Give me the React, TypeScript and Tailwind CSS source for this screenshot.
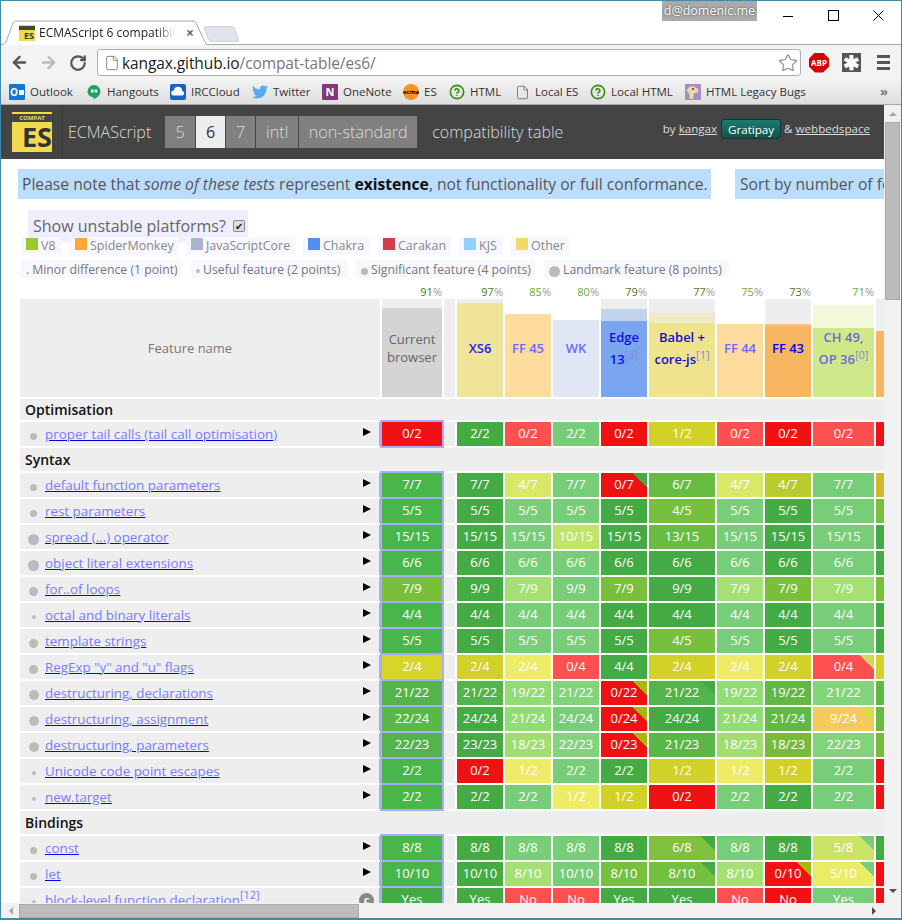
import React from 'react';
import { ArrowLeft, ArrowRight, RotateCw, File, Star, CircleHelp } from 'lucide-react';
import { FaTwitter } from 'react-icons/fa';

// cell colours
const G = 'bg-[#44aa44]';
const L = 'bg-[#78cd78]';
const C = 'bg-[#49b649]';
const R = 'bg-[#f01212]';
const LR = 'bg-[#ff5050]';
const Y = 'bg-[#d1d128]';
const LY = 'bg-[#eeec66]';
const G21 = 'bg-[#52b44a]';
const L21 = 'bg-[#82d47a]';
const L19 = 'bg-[#91dc74]';
const D19 = 'bg-[#62b844]';
const L18 = 'bg-[#a2dd70]';
const D18 = 'bg-[#78bb38]';
const G22 = 'bg-[#5ab848]';
const D4 = 'bg-[#76c03e]';
const D6 = 'bg-[#68bc42]';
const L7 = 'bg-[#a5e074]';
const D7 = 'bg-[#7abf3c]';
const TRI_G = 'bg-[linear-gradient(225deg,#44aa44_10px,#f01212_10px)]';
const TRI_O = 'bg-[linear-gradient(225deg,#a8b808_10px,#f01212_10px)]';
const TRI_RL = 'bg-[linear-gradient(225deg,#cfd85a_10px,#ff5050_10px)]';
const TRI_21 = 'bg-[linear-gradient(225deg,#44aa44_10px,#52b44a_10px)]';
const TRI_9 = 'bg-[linear-gradient(225deg,#cfe040_10px,#f2cb5a_10px)]';
const TRI_6 = 'bg-[linear-gradient(225deg,#44aa44_10px,#80c03e_10px)]';
const TRI_5 = 'bg-[linear-gradient(225deg,#78cd78_10px,#cbe468_10px)]';
const TRI_8 = 'bg-[linear-gradient(225deg,#44aa44_10px,#74c040_10px)]';
const TRI_LY = 'bg-[linear-gradient(225deg,#78cd78_10px,#eaec66_10px)]';

type Row = { name?: string; section?: string; rowH?: string; dot?: string; sup?: string; cells?: [string, string][]; next?: string; flag?: boolean };

const same = (t: string, extra: Partial<Record<number, [string, string]>> = {}) => {
  const base: [string, string][] = [[t, C], [t, G], [t, L], [t, L], [t, G], [t, G], [t, L], [t, G], [t, L]];
  Object.entries(extra).forEach(([k, v]) => { if (v) base[Number(k)] = v; });
  return base;
};

const rows: Row[] = [
  { section: 'Optimisation', rowH: 'h-[21px]' },
  { name: 'proper tail calls (tail call optimisation)', dot: 'size-[7px]', next: R, cells: [['0/2', R], ['2/2', G], ['0/2', LR], ['2/2', L], ['0/2', R], ['1/2', Y], ['0/2', LR], ['0/2', R], ['0/2', LR]] },
  { section: 'Syntax', rowH: 'h-[23px]' },
  { name: 'default function parameters', dot: 'size-[7px]', next: 'bg-[#d2b82a]', cells: [['7/7', C], ['7/7', G], ['4/7', 'bg-[#d9e868]'], ['7/7', L], ['0/7', TRI_G], ['6/7', D6], ['4/7', 'bg-[#d9e868]'], ['4/7', 'bg-[#b8cc30]'], ['7/7', L]] },
  { name: 'rest parameters', dot: 'size-[7px]', next: D4, cells: same('5/5', { 5: ['4/5', D4] }) },
  { name: 'spread (...) operator', dot: 'size-[11px]', next: G, cells: same('15/15', { 3: ['10/15', 'bg-[#bfe46a]'], 5: ['13/15', D6] }) },
  { name: 'object literal extensions', dot: 'size-[11px]', next: G, cells: same('6/6') },
  { name: 'for..of loops', dot: 'size-[9px]', next: D7, cells: [['7/9', D7], ['9/9', G], ['7/9', L7], ['9/9', L], ['7/9', D7], ['9/9', G], ['7/9', L7], ['7/9', D7], ['7/9', L7]] },
  { name: 'octal and binary literals', dot: 'size-[4px]', next: G, cells: same('4/4') },
  { name: 'template strings', dot: 'size-[9px]', next: G, cells: same('5/5', { 5: ['4/5', D4] }) },
  { name: 'RegExp "y" and "u" flags', dot: 'size-[9px]', next: Y, cells: [['2/4', 'bg-[#d5d52a]'], ['2/4', Y], ['2/4', LY], ['0/4', LR], ['4/4', G], ['2/4', Y], ['2/4', LY], ['2/4', Y], ['0/4', TRI_RL]] },
  { name: 'destructuring, declarations', dot: 'size-[10px]', next: D19, cells: [['21/22', G21], ['21/22', G21], ['19/22', L19], ['21/22', L21], ['0/22', TRI_O], ['21/22', TRI_21], ['19/22', L19], ['19/22', D19], ['21/22', L21]] },
  { name: 'destructuring, assignment', dot: 'size-[10px]', next: D6, cells: [['22/24', G22], ['24/24', G], ['21/24', L19], ['24/24', L], ['0/24', TRI_O], ['24/24', G], ['21/24', L19], ['21/24', D19], ['9/24', TRI_9]] },
  { name: 'destructuring, parameters', dot: 'size-[10px]', next: D18, cells: [['22/23', G21], ['23/23', G], ['18/23', L18], ['22/23', L21], ['0/23', TRI_O], ['21/23', G22], ['18/23', L18], ['18/23', D18], ['22/23', L21]] },
  { name: 'Unicode code point escapes', dot: 'size-[4px]', next: R, cells: [['2/2', C], ['0/2', R], ['1/2', LY], ['2/2', L], ['2/2', G], ['1/2', Y], ['1/2', LY], ['1/2', Y], ['2/2', L]] },
  { name: 'new.target', dot: 'size-[4px]', next: R, cells: [['2/2', C], ['2/2', G], ['2/2', L], ['1/2', LY], ['1/2', Y], ['0/2', R], ['2/2', L], ['2/2', G], ['2/2', L]] },
  { section: 'Bindings', rowH: 'h-[23px]' },
  { name: 'const', dot: 'size-[7px]', next: G, cells: same('8/8', { 5: ['6/8', TRI_6], 8: ['5/8', TRI_5] }) },
  { name: 'let', dot: 'size-[7px]', next: R, cells: [['10/10', C], ['10/10', G], ['8/10', L7], ['10/10', L], ['8/10', D4], ['8/10', TRI_8], ['8/10', L7], ['0/10', TRI_O], ['5/10', TRI_LY]] },
  { name: 'block-level function declaration', sup: '[12]', dot: 'size-[4px]', next: R, flag: true, cells: [['Yes', G], ['Yes', G], ['No', LR], ['No', LR], ['Yes', G], ['Yes', G], ['No', LR], ['No', R], ['Yes', L]] },
];

const browsers = [
  { name: 'XS6', pct: '97', pctColor: 'text-[#4e7d14]', bg: 'bg-[#eeeeee]', text: 'text-[#2222ee] font-semibold', bars: [['h-[94px]', 'bg-[#f0e49a]']] },
  { name: 'FF 45', pct: '85', pctColor: 'text-[#6ea83a]', bg: 'bg-white', text: 'text-[#6a6aff] font-semibold', bars: [['h-[83px]', 'bg-[#fedc9e]']] },
  { name: 'WK', pct: '80', pctColor: 'text-[#6ea83a]', bg: 'bg-white', text: 'text-[#6a6aff] font-semibold', bars: [['h-[77px]', 'bg-[#e0e6f3]']] },
  { name: 'Edge 13', sup: '[3]', pct: '79', pctColor: 'text-[#4e7d14]', bg: 'bg-[#eeeeee]', text: 'text-[#1111dd] font-semibold', bars: [['h-[12px]', 'bg-[#c3d3ee]'], ['h-[76px]', 'bg-[#7aa5ef]']] },
  { name: 'Babel + core-js', sup: '[1]', pct: '77', pctColor: 'text-[#4e7d14]', bg: 'bg-[#eeeeee]', text: 'text-[#1111cc] font-semibold', bars: [['h-[10px]', 'bg-[#efe9c9]'], ['h-[74px]', 'bg-[#f0e38e]']] },
  { name: 'FF 44', pct: '75', pctColor: 'text-[#6ea83a]', bg: 'bg-white', text: 'text-[#6a6aff] font-semibold', bars: [['h-[73px]', 'bg-[#fedc9e]']] },
  { name: 'FF 43', pct: '73', pctColor: 'text-[#4e7d14]', bg: 'bg-[#eeeeee]', text: 'text-[#0000ee] font-semibold', bars: [['h-[2px]', 'bg-[#f3c08e]'], ['h-[71px]', 'bg-[#f7b760]']] },
  { name: 'CH 49, OP 36', sup: '[0]', pct: '71', pctColor: 'text-[#6ea83a]', bg: 'bg-white', text: 'text-[#6a6ad8] font-semibold', bars: [['h-[23px]', 'bg-[#f1f9da]'], ['h-[69px]', 'bg-[#cfe98a]']] },
];

const widths = ['w-[360px]', 'w-[60px]', 'w-[11px]', 'w-[46px]', 'w-[46px]', 'w-[46px]', 'w-[46px]', 'w-[66px]', 'w-[46px]', 'w-[46px]', 'w-[61px]', 'w-[46px]'];

const legend = [
  ['V8', 'bg-[#9ac92e]', 'w-[41px]'],
  ['SpiderMonkey', 'bg-[#ffa733]', 'w-[108px]'],
  ['JavaScriptCore', 'bg-[#aab4cf]', 'w-[109px]'],
  ['Chakra', 'bg-[#5190f0]', 'w-[67px]'],
  ['Carakan', 'bg-[#d63a44]', 'w-[73px]'],
  ['KJS', 'bg-[#90d0ff]', 'w-[44px]'],
  ['Other', 'bg-[#f0db68]', 'w-[58px]'],
];

const points = [
  ['.', 'Minor difference (1 point)', 'w-[161px]', ''],
  ['', 'Useful feature (2 points)', 'w-[156px]', 'size-[4px]'],
  ['', 'Significant feature (4 points)', 'w-[179px]', 'size-[7px]'],
  ['', 'Landmark feature (8 points)', 'w-[185px]', 'size-[11px]'],
];

const EsLogo = ({ small }: { small?: boolean }) => (
  small ? (
    <div className="flex flex-col w-[16px] h-[16px] bg-[#f0db4f] pt-[1px] shrink-0">
      <div className="h-[4px] bg-[#444]" />
      <div className="text-[9px] leading-[11px] font-bold text-[#333] text-right pr-[1px]">ES</div>
    </div>
  ) : (
    <div className="flex flex-col w-[40px] h-[40px] bg-[#f0db4f] pt-[2px] shrink-0 overflow-hidden">
      <div className="h-[8px] bg-[#444] text-[6px] leading-[8px] font-bold text-[#f0db4f] text-center">COMPAT</div>
      <div className="text-[27px] leading-[30px] font-bold text-[#333] text-right">ES</div>
    </div>
  )
);

const Bookmark = ({ icon, label, className }: { icon: React.ReactNode; label: string; className: string }) => (
  <div className={`flex items-center gap-[5px] shrink-0 ${className}`}>
    {icon}
    <span className="text-[11.500px] text-[#333]">{label}</span>
  </div>
);

const Bookmarks = () => (
  <div className="flex items-center h-[25px] bg-[linear-gradient(#f2f2f2,#dedede)] border-b border-[#a8a8a8] pl-[8px] relative">
    <Bookmark className="w-[77px]" label="Outlook" icon={
      <div className="flex items-center w-[16px] h-[16px] bg-[#0f78d4] rounded-[1px] text-white text-[10px] leading-[16px] font-bold pl-[1px]">
        O<span className="size-[5px] ml-[1px] bg-white" />
      </div>
    } />
    <Bookmark className="w-[84px]" label="Hangouts" icon={
      <svg viewBox="0 0 16 16" className="size-[16px]"><path d="M8 1a6.5 6.5 0 0 0-6.5 6.5C1.500 11 4.500 13 7.500 13v2.500C11 14 14.500 11 14.500 7.500A6.500 6.500 0 0 0 8 1z" fill="#1da261" /><rect x="5" y="5.500" width="2.500" height="3" fill="#fff" /><rect x="8.700" y="5.500" width="2.500" height="3" fill="#fff" /></svg>
    } />
    <Bookmark className="w-[82px]" label="IRCCloud" icon={
      <svg viewBox="0 0 16 16" className="size-[16px]"><rect width="16" height="16" rx="2" fill="#1c62c4" /><path d="M3.500 11.500a2.500 2.500 0 0 1 .5-5 4 4 0 0 1 8 .5 2.300 2.300 0 0 1 .5 4.500z" fill="#fff" /></svg>
    } />
    <Bookmark className="w-[70px]" label="Twitter" icon={<FaTwitter className="size-[16px] text-[#55acee]" />} />
    <Bookmark className="w-[81px]" label="OneNote" icon={
      <div className="w-[16px] h-[16px] bg-[#80397b] text-white text-[11px] leading-[16px] font-bold text-center rounded-[1px]">N</div>
    } />
    <Bookmark className="w-[46px]" label="ES" icon={
      <div className="w-[16px] h-[16px] rounded-full bg-[#f7931e] text-black text-[6px] leading-[16px] font-bold text-center">ecma</div>
    } />
    <Bookmark className="w-[66px]" label="HTML" icon={<CircleHelp className="size-[16px] text-[#3a8a12]" strokeWidth={2.4} />} />
    <Bookmark className="w-[75px]" label="Local ES" icon={<File className="size-[15px] text-[#666]" strokeWidth={1.3} />} />
    <Bookmark className="w-[95px]" label="Local HTML" icon={<CircleHelp className="size-[16px] text-[#3a8a12]" strokeWidth={2.4} />} />
    <Bookmark className="w-[130px]" label="HTML Legacy Bugs" icon={
      <svg viewBox="0 0 16 16" className="size-[16px]"><rect width="16" height="16" fill="#a78dc8" /><path d="M2 6c1-4 7-5 9-2 2 0 3 2 2 4-1 1-3 1-4 1l-1 6H5L4 9C3 9 2 8 2 6z" fill="#ecd9a6" /><circle cx="8" cy="5" r="1" fill="#333" /></svg>
    } />
    <span className="absolute left-[879px] top-[3px] text-[13px] leading-[16px] font-bold text-[#777]">»</span>
  </div>
);

const Toolbar = () => (
  <div className="flex items-center h-[35px] bg-[#f3f3f3] pl-[9px]">
    <ArrowLeft className="size-[19px] text-[#555]" strokeWidth={3} />
    <ArrowRight className="size-[19px] text-[#bbb] ml-[10px]" strokeWidth={3} />
    <RotateCw className="size-[18px] text-[#555] ml-[11px]" strokeWidth={3} />
    <div className="flex items-center w-[704px] h-[27px] ml-[10px] bg-white border border-[#b0b0b0] rounded-[3px] pl-[6px] pr-[2px]">
      <File className="size-[16px] text-[#777] shrink-0" strokeWidth={1.3} />
      <div className="ml-[2px] text-[15.5px] leading-[20px] text-[#777] whitespace-nowrap tracking-[-0.1px]">
        <span className="text-[#222]">kangax.github.io</span>/compat-table/es6/
      </div>
      <Star className="size-[20px] text-[#888] ml-auto fill-white" strokeWidth={1.3} />
    </div>
    <div className="flex items-center justify-center size-[20px] ml-[8px] bg-[#d40000] [clip-path:polygon(30%_0,70%_0,100%_30%,100%_70%,70%_100%,30%_100%,0_70%,0_30%)] text-white text-[8px] font-bold">ABP</div>
    <div className="flex items-center justify-center size-[19px] ml-[13px] bg-[#555] text-white text-[20px] leading-[19px] font-bold">✱</div>
    <div className="flex flex-col gap-[3px] w-[13px] ml-[16px]">
      <div className="h-[3px] bg-[#555]" />
      <div className="h-[3px] bg-[#555]" />
      <div className="h-[3px] bg-[#555]" />
    </div>
  </div>
);

const TabStrip = () => (
  <div className="flex h-[44px] bg-white border-b border-[#a8a8a8] relative">
    <div className="relative flex items-center w-[205px] h-[25px] mt-[19px] ml-[1px] pl-[17px] bg-white">
      <svg viewBox="0 0 205 25" className="absolute inset-0 w-[205px] h-[25px]">
        <path d="M0 25 L4 22 L11 3 Q12 1 14 1 L191 1 Q193 1 194 3 L203 22 L205 25" fill="#fff" stroke="#a8a8a8" />
      </svg>
      <div className="relative flex items-center gap-[4px]">
        <EsLogo small />
        <span className="w-[137px] text-[12px] text-[#222] whitespace-nowrap overflow-hidden [mask-image:linear-gradient(90deg,#000_85%,transparent)]">ECMAScript 6 compatibility table</span>
        <span className="ml-[6px] text-[#666] text-[14px] leading-none font-bold">×</span>
      </div>
    </div>
    <div className="w-[31px] h-[16px] mt-[25px] bg-[#dfe3ea] rounded-[3px] border border-[#cfd3da] skew-x-[20deg] -ml-[1px]" />
    <div className="absolute left-[661px] top-0 w-[95px] h-[20px] bg-[#aaaaaa] text-center text-[12.500px] leading-[20px] text-white [text-shadow:0_0_2px_#333]">d@domenic.me</div>
    <div className="absolute left-[782px] top-[15px] w-[10px] h-[1px] bg-black" />
    <div className="absolute left-[827px] top-[9px] size-[11px] border border-black" />
    <svg viewBox="0 0 11 11" className="absolute left-[872px] top-[9px] size-[11px]"><path d="M0.500 0.500 L10.500 10.500 M10.500 0.500 L0.500 10.500" stroke="#000" fill="none" /></svg>
  </div>
);

const PageHeader = () => (
  <div className="flex items-center h-[54px] bg-[#444444] text-[#dddddd]">
    <div className="flex items-center h-full pl-[11px] pr-[10px] border-r border-[#3a3a3a]">
      <EsLogo />
    </div>
    <span className="ml-[5px] text-[16px] font-light">ECMAScript</span>
    <div className="flex gap-[1px] ml-[14px] text-[16.200px] font-light">
      <div className="w-[30px] h-[32px] leading-[32px] text-center bg-[#808080]">5</div>
      <div className="w-[29px] h-[32px] leading-[32px] text-center bg-[#eeeeee] text-[#333] font-normal">6</div>
      <div className="w-[29px] h-[32px] leading-[32px] text-center bg-[#808080]">7</div>
      <div className="w-[42px] h-[32px] leading-[32px] text-center bg-[#808080]">intl</div>
      <div className="w-[118px] h-[32px] leading-[32px] text-center bg-[#808080]">non-standard</div>
    </div>
    <span className="ml-[15px] text-[16px] font-light">compatibility table</span>
    <div className="flex items-center ml-auto mr-[14px] -mt-[6px] text-[11.600px]">
      <span>by <a className="underline">kangax</a></span>
      <span className="ml-[4px] w-[60px] h-[20px] leading-[19px] text-center rounded-[3px] bg-[linear-gradient(#1c7a6c,#11524a)] border border-[#0c3a34] text-white">Gratipay</span>
      <span className="ml-[3px]">&amp; <a className="underline">webbedspace</a></span>
    </div>
  </div>
);

const Legend = () => (
  <>
    <div className="ml-[17px] mt-[10px] flex gap-[24px] whitespace-nowrap overflow-hidden text-[15.650px] text-[#555]">
      <div className="h-[30px] w-[693px] shrink-0 leading-[30px] pl-[4px] bg-[#bbddff]">
        Please note that <em>some of these tests</em> represent <b className="font-bold text-[#111]">existence</b>, not functionality or full conformance.
      </div>
      <div className="h-[30px] shrink-0 leading-[30px] pl-[5px] pr-[6px] bg-[#bbddff]">Sort by number of features?</div>
    </div>
    <div className="flex items-center gap-[7px] ml-[27px] mt-[11px] w-[220px] h-[32px] pl-[5px] bg-[#eeeeff] text-[16px] text-[#666]">
      Show unstable platforms?
      <span className="flex items-center justify-center size-[12px] rounded-[2px] bg-[#ddd] border border-[#888] text-[10px] text-[#222]">✔</span>
    </div>
    <div className="relative flex gap-[8px] ml-[20px] -mt-[5px] h-[18px] text-[12.500px] text-[#888]">
      {legend.map(([label, swatch, w]) => (
        <div key={label} className={`flex gap-[3px] h-[18px] bg-[#f7f7ff] pl-[5px] leading-[18px] whitespace-nowrap ${w}`}>
          <span className={`size-[12px] mt-[1px] shrink-0 ${swatch}`} />
          {label}
        </div>
      ))}
    </div>
    <div className="flex gap-[9px] ml-[20px] mt-[5px] h-[18px] text-[12.250px] text-[#777]">
      {points.map(([mark, label, w, dot]) => (
        <div key={label} className={`flex items-center gap-[3px] h-[18px] bg-[#f7f7ff] pl-[5px] pt-[2px] whitespace-nowrap ${w}`}>
          {mark && <span>{mark}</span>}
          {dot && <span className={`rounded-full bg-[#bbbbbb] mt-[2px] ${dot}`} />}
          {label}
        </div>
      ))}
    </div>
  </>
);

const Arrow = () => (
  <svg viewBox="0 0 8 8" className="size-[8px] mb-[4px] ml-auto shrink-0"><path d="M0 0 L8 4 L0 8 Z" fill="#000" /></svg>
);

const Table = () => (
  <table className="table-fixed border-separate border-spacing-[2px] mt-[6px] ml-[17px] w-[906px] text-[13px]">
    <colgroup>
      {widths.map((w, i) => <col key={i} className={w} />)}
    </colgroup>
    <tbody>
      <tr className="h-[11px]">
        <td className="p-0" />
        <td className="p-0 text-right text-[11px] leading-[11px] whitespace-nowrap"><span className="text-[#4e7d14]">91</span><span className="text-[#999]">%</span></td>
        <td className="p-0" />
        {browsers.map((b) => (
          <td key={b.name} className="p-0 text-right text-[11px] leading-[11px] whitespace-nowrap"><span className={b.pctColor}>{b.pct}</span><span className="text-[#999]">%</span></td>
        ))}
        <td className="p-0" />
      </tr>
      <tr>
        <td className="p-0 pt-[2px] bg-[#eeeeee] h-[98px] text-center text-[#777] pr-[20px]">Feature name</td>
        <td className="p-0 bg-[#eeeeee]">
          <div className="grid h-[98px]">
            <div className="self-end h-[89px] bg-[#d4d4d4] [grid-area:1/1]" />
            <div className="[grid-area:1/1] place-self-center text-center leading-[18px] text-[#666]">Current browser</div>
          </div>
        </td>
        <td className="p-0 bg-[#eeeeee]" />
        {browsers.map((b) => (
          <td key={b.name} className={`p-0 ${b.bg}`}>
            <div className="grid h-[98px]">
              <div className="flex flex-col justify-end [grid-area:1/1]">
                {b.bars.map(([h, bg]) => <div key={bg} className={`${h} ${bg}`} />)}
              </div>
              <div className={`[grid-area:1/1] place-self-center text-center leading-[22px] ${b.text}`}>
                {b.name}{b.sup && <sup className="font-normal text-[#8888dd] text-[11px]">{b.sup}</sup>}
              </div>
            </div>
          </td>
        ))}
        <td className="p-0 bg-[#eeeeee] align-bottom">
          <div className="h-[66px] bg-[#f7b760]" />
        </td>
      </tr>
      {rows.map((r) => r.section ? (
        <tr key={r.section}>
          <td colSpan={12} className={`p-0 pl-[5px] bg-[#eeeeee] text-[14px] leading-[20px] font-semibold text-[#111] ${r.rowH}`}>{r.section}</td>
        </tr>
      ) : (
        <tr key={r.name}>
          <td className="p-0 h-[24px] bg-[#eeeeee]">
            <div className="relative flex items-center h-[24px] pr-[9px]">
              <div className="flex items-center justify-center w-[11px] ml-[8px] mr-[6px] mt-[4px]">
                <span className={`rounded-full bg-[#bbbbbb] ${r.dot}`} />
              </div>
              <a className="text-[13.400px] leading-[20px] pb-[1px] text-[#7a7aff] underline decoration-[#0000ee] whitespace-nowrap">
                {r.name}{r.sup && <sup className="text-[11px]">{r.sup}</sup>}
              </a>
              {r.flag ? (
                <span className="flex items-center justify-center size-[15px] ml-auto -mr-[3px] rounded-full bg-[#888] text-white text-[11px] font-bold">c</span>
              ) : <Arrow />}
            </div>
          </td>
          {r.cells!.map(([text, bg], i) => (
            <React.Fragment key={i}>
              <td className={`p-0 text-center text-white ${bg} ${i === 0 ? 'shadow-[0_0_0_2px_#aaaaff,-3px_0_0_0_#aaaaff] relative' : ''}`}>{text}</td>
              {i === 0 && <td className="p-0 bg-[#eeeeee]" />}
            </React.Fragment>
          ))}
          <td className={`p-0 ${r.next}`} />
        </tr>
      ))}
    </tbody>
  </table>
);

const VScroll = () => (
  <div className="flex flex-col items-center w-[17px] bg-[#f1f1f1] shrink-0">
    <svg viewBox="0 0 8 4" className="w-[8px] h-[4px] mt-[7px]"><path d="M0 4 L4 0 L8 4 Z" fill="#a8a8a8" /></svg>
    <div className="w-[15px] h-[178px] mt-[6px] bg-[#bcbcbc] border border-[#aaaaaa]" />
    <svg viewBox="0 0 8 4" className="w-[8px] h-[4px] mt-auto mb-[25px]"><path d="M0 0 L4 4 L8 0 Z" fill="#505050" /></svg>
  </div>
);

const HScroll = () => (
  <div className="flex items-center h-[15px] bg-[#f1f1f1] shrink-0">
    <svg viewBox="0 0 4 8" className="w-[4px] h-[8px] ml-[8px] shrink-0"><path d="M4 0 L0 4 L4 8 Z" fill="#a8a8a8" /></svg>
    <div className="w-[340px] h-[14px] ml-[6px] bg-[#bcbcbc] border border-[#aaaaaa]" />
    <svg viewBox="0 0 4 8" className="w-[4px] h-[8px] ml-auto mr-[8px] shrink-0"><path d="M0 0 L4 4 L0 8 Z" fill="#505050" /></svg>
  </div>
);

const App = () => (
  <div className="flex flex-col h-[920px] w-[902px] overflow-hidden bg-white border border-b-2 border-[#3f8bab] font-['Open_Sans','Liberation_Sans',sans-serif]">
    <TabStrip />
    <Toolbar />
    <Bookmarks />
    <div className="flex flex-1 min-h-0">
      <div className="flex flex-col flex-1 min-w-0">
        <div className="flex-1 min-h-0 overflow-hidden">
          <PageHeader />
          <Legend />
          <Table />
        </div>
        <HScroll />
      </div>
      <VScroll />
    </div>
  </div>
);

export default App;
